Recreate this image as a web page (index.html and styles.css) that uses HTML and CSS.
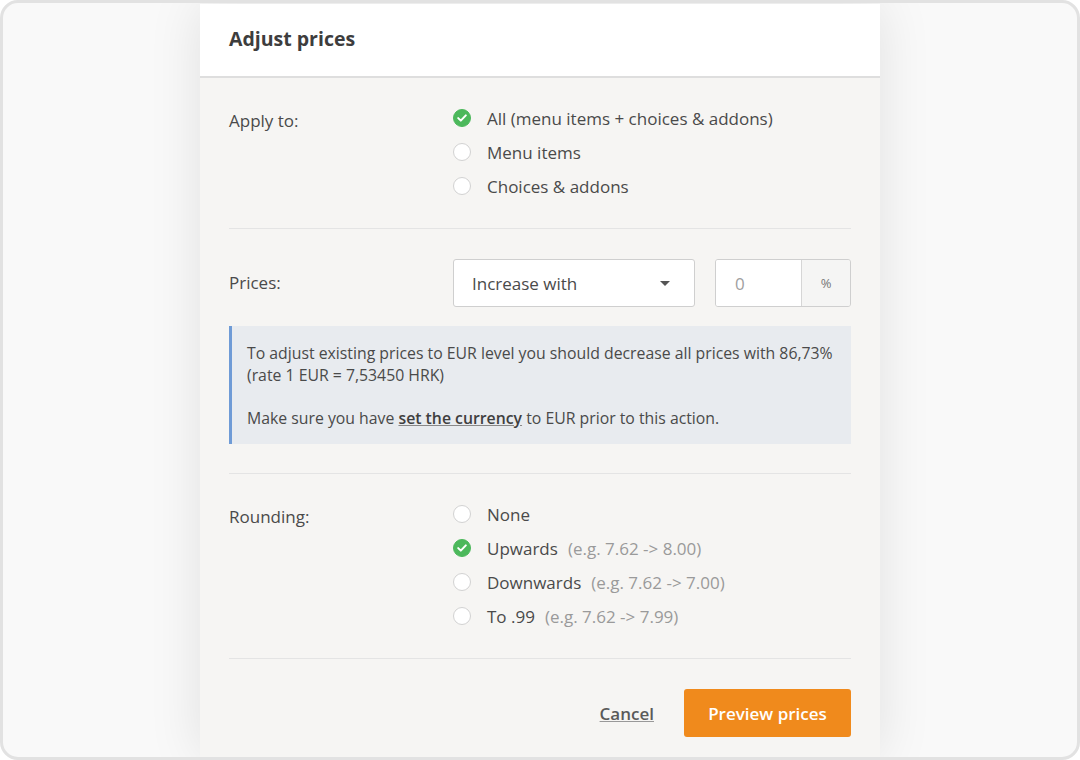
FILE: index.html
```html
<!DOCTYPE html>
<html lang="en">
  <head>
    <meta charset="UTF-8" />
    <meta name="viewport" content="width=device-width, initial-scale=1.0" />
    <title>Adjust prices</title>
    <link rel="stylesheet" href="styles.css">
  </head>
  <body>
    <div class="frame">
      <div class="modal">
        <div class="modal-header">
          <h1 class="title">Adjust prices</h1>
        </div>
        <div class="modal-body">
          <div class="section">
            <div class="label">Apply to:</div>
            <div class="options">
              <div class="option">
                <span class="radio checked"><svg width="10" height="8" viewBox="0 0 10 8"><path d="M1.2 4.1 L3.8 6.6 L8.8 1.4" fill="none" stroke="#fff" stroke-width="2" stroke-linecap="round" stroke-linejoin="round"/></svg></span>
                <span>All (menu items + choices &amp; addons)</span>
              </div>
              <div class="option">
                <span class="radio"></span>
                <span>Menu items</span>
              </div>
              <div class="option">
                <span class="radio"></span>
                <span>Choices &amp; addons</span>
              </div>
            </div>
          </div>

          <div class="section prices">
            <div class="row">
              <div class="label mid">Prices:</div>
              <div class="select">
                <span>Increase with</span>
                <span class="caret"></span>
              </div>
              <div class="input-group">
                <div class="input">0</div>
                <div class="addon">%</div>
              </div>
            </div>
            <div class="notice">
              <p>To adjust existing prices to EUR level you should decrease all prices with 86,73%<br>(rate 1 EUR = 7,53450 HRK)</p>
              <p>Make sure you have <a href="#">set the currency</a> to EUR prior to this action.</p>
            </div>
          </div>

          <div class="section">
            <div class="label">Rounding:</div>
            <div class="options">
              <div class="option">
                <span class="radio"></span>
                <span>None</span>
              </div>
              <div class="option">
                <span class="radio checked"><svg width="10" height="8" viewBox="0 0 10 8"><path d="M1.2 4.1 L3.8 6.6 L8.8 1.4" fill="none" stroke="#fff" stroke-width="2" stroke-linecap="round" stroke-linejoin="round"/></svg></span>
                <span>Upwards</span>
                <span class="hint">(e.g. 7.62 -&gt; 8.00)</span>
              </div>
              <div class="option">
                <span class="radio"></span>
                <span>Downwards</span>
                <span class="hint">(e.g. 7.62 -&gt; 7.00)</span>
              </div>
              <div class="option">
                <span class="radio"></span>
                <span>To .99</span>
                <span class="hint">(e.g. 7.62 -&gt; 7.99)</span>
              </div>
            </div>
          </div>

          <div class="footer">
            <a href="#" class="cancel">Cancel</a>
            <button class="btn">Preview prices</button>
          </div>
        </div>
      </div>
    </div>
  </body>
</html>
```

FILE: styles.css
```css
* {
  box-sizing: border-box;
}
body {
  margin: 0;
  background: #fff;
  font-family: "Open Sans", "Liberation Sans", sans-serif;
  color: #4a4a4a;
}
.frame {
  width: 1080px;
  height: 760px;
  border: 3px solid #e2e2e2;
  border-radius: 18px;
  background: #f9f9f9;
  overflow: hidden;
  display: flex;
  justify-content: center;
}
.modal {
  width: 680px;
  margin-top: 1px;
  background: #f6f5f3;
  box-shadow: 0 0 50px rgba(0, 0, 0, 0.1);
}
.modal-header {
  height: 74px;
  background: #fff;
  border-bottom: 2px solid #dedede;
  padding: 0 29px 3px;
  display: flex;
  align-items: center;
}
.title {
  margin: 0;
  font-size: 19.5px;
  font-weight: 700;
  color: #3d3d3d;
}
.modal-body {
  padding: 0 29px;
}
.section {
  display: flex;
  padding: 23px 0 25px;
  border-bottom: 1px solid #e4e4e4;
}
.label {
  width: 224px;
  flex-shrink: 0;
  font-size: 17px;
  line-height: 34px;
  padding-top: 3px;
}
.label.mid {
  padding-top: 0;
}
.option {
  display: flex;
  align-items: center;
  height: 34px;
  font-size: 17px;
}
.radio {
  width: 18px;
  height: 18px;
  border-radius: 50%;
  background: #fff;
  border: 1px solid #d2d2d2;
  margin-right: 16px;
  display: flex;
  align-items: center;
  justify-content: center;
}
.radio.checked {
  background: #4cb85b;
  border-color: #4cb85b;
}
.hint {
  color: #9a9a9a;
  margin-left: 10px;
}
.prices {
  flex-direction: column;
  padding: 30px 0 29px;
}
.row {
  display: flex;
  align-items: center;
}
.select {
  width: 242px;
  height: 48px;
  background: #fff;
  border: 1px solid #cfcfcf;
  border-radius: 3px;
  padding: 0 24px 0 18px;
  display: flex;
  align-items: center;
  justify-content: space-between;
  font-size: 17px;
}
.caret {
  width: 0;
  height: 0;
  border-left: 5px solid transparent;
  border-right: 5px solid transparent;
  border-top: 5px solid #555;
}
.input-group {
  display: flex;
  margin-left: 20px;
  height: 48px;
  border: 1px solid #cfcfcf;
  border-radius: 3px;
  overflow: hidden;
}
.input {
  width: 86px;
  background: #fff;
  padding-left: 19px;
  display: flex;
  align-items: center;
  font-size: 17px;
  color: #a0a0a0;
  border-right: 1px solid #d6d6d6;
}
.addon {
  width: 48px;
  background: #f5f5f4;
  display: flex;
  align-items: center;
  justify-content: center;
  font-size: 13px;
  color: #777;
}
.notice {
  margin-top: 19px;
  background: #e8ebef;
  border-left: 3px solid #6f9bd6;
  padding: 16px 16px 15px 15px;
  font-size: 15.8px;
  line-height: 22px;
  color: #4a4a4a;
}
.notice p {
  margin: 0;
}
.notice p + p {
  margin-top: 21px;
}
.notice a {
  color: #3f3f3f;
  font-weight: 600;
  text-decoration: underline;
  text-decoration-color: #888;
}
.footer {
  display: flex;
  justify-content: flex-end;
  align-items: center;
  padding-top: 30px;
}
.cancel {
  font-size: 17px;
  font-weight: 600;
  color: #5a5a5a;
  text-decoration: underline;
  text-decoration-color: #999;
  margin-right: 30px;
}
.btn {
  width: 167px;
  height: 48px;
  border: none;
  border-radius: 3px;
  background: #f08a1c;
  color: #fff;
  font-family: inherit;
  font-size: 17px;
  font-weight: 600;
}
```
